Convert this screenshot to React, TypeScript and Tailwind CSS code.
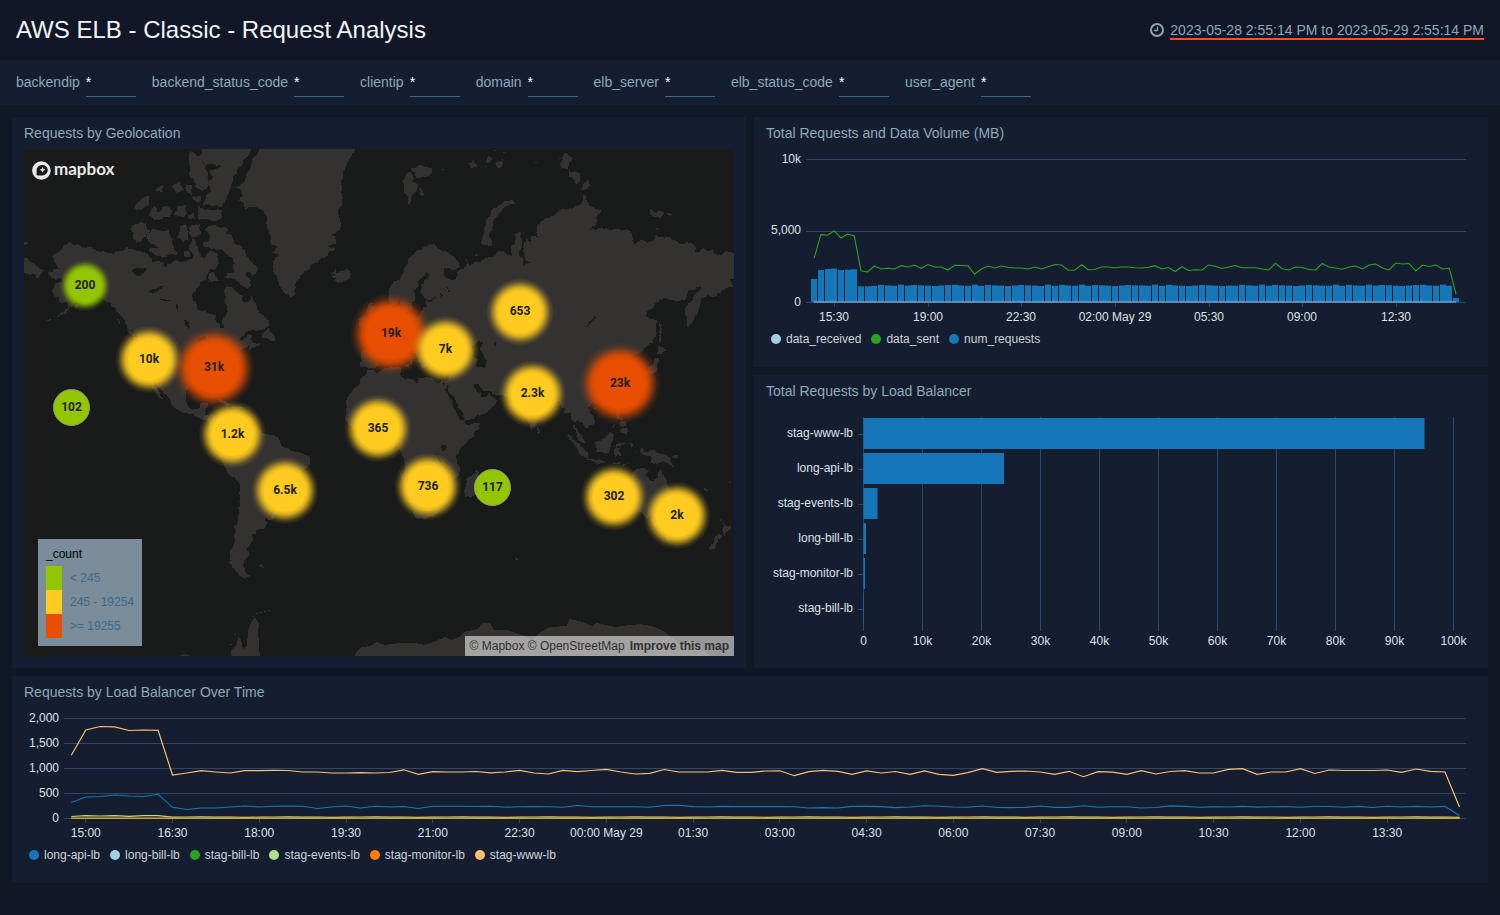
import React from "react";

/* ------------------------------------------------------------------ map */

type Pt = [number, number];

const LAND: string[] = [
  // North America
  "-168,65.6 -166,64.5 -161,64.5 -161,63.6 -164.5,63 -166,61.7 -165,60.6 -162,59.9 -162,58.7 -158.5,58.8 -157.5,57.5 -160,56 -163,55 -164.8,54.6 -161,55.2 -158,56.3 -156,57.5 -154,58.5 -153.5,59.5 -151.8,60.8 -150,61.2 -151.7,59.4 -148,60 -146,60.8 -143,60 -139.9,59.6 -137.5,58.9 -136,58.2 -133.5,57 -131.5,55.5 -130.2,54.6 -129,53 -127.5,51 -124.5,49.8 -123,49 -122.5,47.5 -124.7,48.3 -124,46.3 -124.2,43 -124.3,40.4 -123.7,39 -122.5,37.7 -121,35.5 -120.5,34.5 -118.5,34 -117.2,33 -116,30.5 -115,28 -114,27 -112.3,25 -110.3,23.2 -109.5,23.2 -111,25.5 -112.5,28 -114.5,31 -114.7,31.8 -113,31 -112,29 -110.5,27.3 -109.3,26 -107.5,24.5 -105.7,22.5 -105.5,20.5 -104,19 -101.7,17.8 -99,16.6 -96,15.8 -94.5,16.2 -92.2,14.6 -91,13.9 -88,13.2 -87.5,12.9 -85.9,11.2 -85.7,10 -84,9.5 -83.5,8.4 -82,8.2 -80.5,7.3 -80,8.3 -79.5,8.9 -78.2,7.5 -77,8.2 -79.5,9.5 -81.5,8.9 -83.5,10.8 -83.5,13 -83.2,15 -85.5,15.9 -88.3,15.7 -88.2,17.5 -87.8,18.5 -87,21.2 -88.3,21.5 -90.3,21.1 -90.7,19.5 -92,18.6 -94.5,18.1 -96,19 -97.5,21 -97.8,22.5 -97.5,25 -97.3,27.5 -95.5,28.9 -94,29.5 -91.8,29.6 -89.5,29 -89.5,30.2 -86.5,30.4 -84.2,30 -82.8,28.5 -82.3,27 -81,25.2 -80.2,25.7 -80.5,28 -81.3,30 -81,32 -79,33.5 -77.5,34.3 -75.7,35.2 -76,37 -75.2,38.3 -74,40 -74,40.7 -71,41.5 -70,41.7 -70.8,43 -69,44 -67,44.7 -66,45.2 -64.8,45.4 -66.1,44.3 -65.5,43.5 -63.5,44.6 -61,45.3 -60.2,46.5 -61.5,45.9 -64,46 -65,47.5 -64.5,48.8 -66.5,49.2 -70,47 -71,46.8 -68,49 -66.5,50.2 -62,50.2 -59,50.6 -57,51.5 -55.7,52.3 -55.9,53.5 -57.5,54.5 -60,55.3 -61.5,56.5 -61.8,57.8 -63.5,59.2 -64.5,60.3 -66,58.7 -68,58.5 -69.5,59 -69.6,60.5 -71.5,61.2 -74,62.3 -77.8,62.4 -77.5,60 -78.5,58.8 -77,57.3 -76.6,56 -79,54.6 -79,52.5 -78.8,51.3 -80.5,51.2 -82.3,53 -82.2,55.2 -85,55.3 -88,56.5 -92.5,57 -93,58.7 -94.7,59 -94.5,61 -93,62 -91,62.8 -90.7,63.7 -88,64.1 -87,65.3 -86,66.2 -83,66.2 -81.3,67.5 -81.5,69 -84.5,69.8 -86,69.9 -88,68.8 -88,67.9 -90,68.8 -91.5,69.7 -92,70.5 -93,71.5 -95,72 -95.5,71 -96.3,70 -94,69 -95.5,68.3 -98,67.8 -101,67.8 -104,68 -107.5,67.4 -108.5,66.6 -109,67.8 -111,67.8 -115,67.8 -115,68.5 -117,69 -121,69.8 -124.5,70.1 -127,70.2 -128,70.5 -131,69.9 -135,69.3 -139,69.6 -144,70 -148,70.4 -152,70.9 -156.5,71.3 -160,70.6 -163,69.5 -166,68.8 -164,67.5 -161.8,66.5 -164,66.5",
  // Greenland, Iceland
  "-73,78.4 -68,79.2 -66,80 -64,81 -61,82 -58,83.4 -30,83.9 -12,83.6 -11.5,81.9 -14,81.2 -16,80.5 -18,80 -19,78 -18.5,76.5 -21,75.5 -19.5,74.5 -21,73 -24,72.6 -22,72.2 -22,71 -26,70.5 -22,70.2 -26,69 -30,68.2 -33,67.5 -37,66 -40,65 -42,62.5 -43,60.2 -45,60 -48,61 -50,62.5 -52,65 -53.5,66.5 -53.7,68 -51,69.2 -54,69.5 -51.5,70.6 -54.5,70.8 -55,72 -57,74 -59,75.8 -63,76.2 -68,76 -71,77 -69,77.6",
  "-24.3,65.5 -22,66.4 -21.4,65.6 -20.5,65.7 -18,66.1 -16,66.4 -14.5,65 -15,64.3 -18.7,63.4 -22.5,63.9 -22,64.5 -24,64.9 -22.3,65.3",
  // Arctic archipelago
  "-92,83.5 -62,83.5 -62,82.5 -65,81.6 -69,80.6 -72,79.8 -74.5,78.9 -76,78 -78,77 -80,76.2 -84,76.4 -89,76.4 -88,77.5 -85,78 -87,79 -84,79.4 -86,80 -80,80.4 -84,80.6 -88,80.4 -91,81.2 -89,82",
  "-96,81.6 -91,81.2 -88,80.3 -86.5,79 -89,78.1 -93,78.4 -95.5,79.4 -96.5,80.6",
  "-79.5,75.8 -80,74.7 -85,74.5 -92,74.7 -92,76.6 -89,76 -84,75.9",
  "-89,73.2 -85,73.8 -81,73.6 -78,72.8 -74,71.8 -70,70.7 -67.5,69 -65,68 -62,67 -61.8,66 -64,65 -66,65.9 -68,65.6 -65,64 -64.7,62.8 -66.5,62 -69,62.8 -72,63.8 -75,64.5 -78,64.5 -77,65.5 -73.5,65.6 -73,67.5 -74,68.4 -77,69.2 -79,70 -82,69.9 -86,70.3 -88.5,70.5 -89,71.3 -86,71.5 -86,72.5",
  "-87,63.7 -85,65.8 -84,65.8 -81,64 -83,63.8",
  "-117,71.3 -118,72.5 -114,73.3 -110,73 -107,73.3 -105,72 -105,71 -101.5,69.6 -103,69 -106,69.3 -110,68.6 -114,69.2 -117,70 -112,70.4",
  "-125,71.9 -123,71.2 -120,71.7 -116,73 -118,74.2 -121,74.3 -124,74.1 -125.5,73.4",
  "-102.5,72 -101,73.6 -98,74 -96.5,73 -96.5,71.8 -99,71.3",
  "-95.5,72 -95.5,73.9 -91,74 -90.2,73 -92.5,72.1",
  "-117,75.2 -114,76.4 -112,75.6 -109,76.4 -105.5,75.9 -106,75 -110,74.7 -114,74.6",
  "-104,75.2 -102,76.4 -98,76.5 -97,75.4 -100,75",
  "-97,75.3 -93.5,76 -93,74.8 -96,74.7",
  "-124,76.2 -121,77 -116,77.5 -119,76.2 -123,75.9",
  "-105,78.5 -101,79 -99,78.2 -103,77.8",
  "-112,78.5 -109,78.7 -109.5,77.9 -113,77.9",
  "-98,78.8 -95,78.7 -95,77.6 -97.5,78",
  "-95,77.4 -90,77.6 -91,76.8",
  "-99,69.8 -96,69.5 -95.5,68.7 -99,69",
  "-79.5,73.6 -76.5,73.2 -78,72.8 -80.5,73",
  "-59,47.8 -57.5,50.5 -55.8,51.5 -55.5,50 -53.5,49 -53,47 -55.5,47 -56,47.7",
  "-64,49.9 -62,49.3 -63.5,49.4",
  "-128,50.8 -125.5,50.2 -123.5,48.5 -125,48.8",
  "-133,54 -131.8,54 -131.5,52.5",
  "-154.5,57.6 -152.5,58.3 -152.5,57.4 -154,57",
  "-169,53.3 -166,54.2 -167,53.4",
  "-84.8,22 -82,23.1 -79,22.7 -77,21.5 -74.3,20.2 -77.5,19.9 -77.5,20.8 -80.5,21.8 -82.5,22.6",
  "-74,19.9 -70,19.8 -68.5,18.6 -71,17.8 -74.3,18.3",
  "-78.3,18.4 -76.3,18.1 -77.3,17.8",
  "-67.2,18.5 -65.6,18.4 -67,18",
  // South America
  "-77.5,8.6 -75.5,10.8 -74,11.2 -71.7,12.4 -71.5,10.9 -70,11.8 -68,10.6 -64,10.4 -61.9,10.7 -61,8.5 -57,6 -52,4.8 -50,1.8 -49.5,0 -48,-1 -44.5,-2.5 -41,-3 -38.5,-3.8 -35.3,-5.3 -34.8,-8 -37,-11.5 -39,-13.5 -39,-17.5 -41,-22 -44.5,-23.2 -48,-25.5 -48.6,-28.5 -51,-31.5 -53.5,-34.2 -55,-35 -58,-34.3 -57,-36 -58,-38.2 -62,-39 -62.3,-40.8 -65,-41 -63.7,-42.5 -65.3,-44.5 -67.5,-46 -65.8,-47.5 -68.5,-50.2 -68.3,-52.3 -65.2,-54.8 -68,-55.7 -71,-54.8 -74.5,-52.5 -75.5,-49 -75.5,-46.7 -73,-44 -73.8,-41.5 -73.5,-38 -71.7,-33.5 -71.5,-30 -70.5,-26 -70.2,-20 -71.5,-17.5 -75.5,-15 -78,-10.5 -79.8,-7 -81.2,-5.5 -80.3,-3.5 -80.9,-2 -80,0.5 -78.5,2.2 -77.3,4 -77.5,7",
  "-61,-51.5 -58,-51.4 -60,-52.2",
  // Africa
  "-6,35.8 -2,35.2 3,36.8 10,37.3 11,36.8 10.3,34.2 12,32.8 15.3,32.3 19.5,30.3 20,32.5 23,32.6 29,30.9 32.5,31.2 33,30.5 32.6,29.9 33.5,27.8 35.5,24 37.2,21 37.5,18.7 39.5,15.5 43,12.5 43.3,11.5 45,10.5 51.2,11.8 50.8,9.5 48,4.5 44,1 41,-2 39,-4.7 39.5,-7 40.6,-10.5 40.6,-14.8 37,-17.7 34.8,-20 35.5,-24 32.8,-26 32,-28.8 28.5,-32.8 25.5,-34 20,-34.8 18.4,-34 17,-29.5 15,-26.8 14.4,-22.5 11.8,-17.5 13.5,-12.5 13,-8.5 12,-5.5 9.3,-2 9.5,1 9.6,3.8 8.5,4.6 6,4.3 4,6.4 1,5.9 -2,4.8 -7.5,4.4 -10,6 -13,8.5 -15,10.8 -16.7,12.5 -17.4,14.7 -16.3,16.5 -16.3,19.5 -17,21 -15.5,24.5 -13,27.7 -10,29.5 -9.7,31.5 -7,33.7",
  "49.3,-12 50.4,-15.7 47,-25 44,-25 43.3,-22 44.4,-19.5 44.4,-16.2 47,-15.3",
  // Eurasia
  "-9,37 -6,37 -5.5,36 -2,36.8 0,38.7 0,40 3,42 4.5,43.4 7.5,43.8 9,44.3 10.5,43 12.5,41.5 15,40.1 16,38 17,39 16.8,40.4 18.5,40.2 15.5,42 13.5,43.6 12.4,44.8 13.7,45.6 15,44.3 18,42.7 19.5,41.5 19.5,40 21.5,37 23,36.5 23.8,38 24,40.3 26,40.8 28.8,41 28,43 30,45.5 31.5,46.6 33.5,46 32.6,45.4 35,44.8 36.5,45.3 35,46.3 38,47 39.3,47.2 37.8,45.5 39.5,44 41.5,42 41.3,41.3 38,41 35,42 31.5,41.3 29.2,41 27,40.3 26.2,39 27.5,37 30,36.4 32.5,36.1 36,36.7 35.8,34.5 34.9,32 34.2,31.3 32.2,31.2 32.6,29.9 34.2,27.8 34.9,29.5 35,28 37,25 39,21.5 42.5,16.8 43.3,12.7 45,12.9 52,15.6 55.5,18 59.8,22.4 58.5,23.7 56.4,24.8 56.3,26.2 54,24.2 51.5,24.3 51.3,26 50.2,26.5 48,29.7 50.5,29.8 53,27 57,27 57.5,25.6 61.5,25 66.5,25.2 68.5,23.5 70.5,20.8 72.7,21 72.8,19 74.5,14 76.3,10 77.5,8 79.8,10.3 80.2,13.2 80.3,15.6 82.3,16.7 86.8,20.5 89,21.8 91.8,22.4 94.3,18.5 94.3,16 97,17 98.5,13 98.5,8.5 100.3,6 101,3 103.5,1.3 104.2,1.5 103.4,4.5 101,7 99.3,9.3 99.2,12 100.5,13.5 102.5,12 104.9,8.7 106.7,10.4 109.3,11.8 109,14.5 107,17 105.8,19 108,21.6 110.5,21 114,22.4 117,23.5 119.5,25.7 121.8,29 121.9,31.2 120,34 119.3,35 122.5,37 119,37.5 118,39 121.5,40.8 121.5,39 124.5,40 125,38 126.5,36 126.5,34.3 129.2,35.3 129.4,37 127.6,39.3 130,42 133,42.8 136,45 140.5,48.5 140.5,52.5 141.4,53.2 138,54 135.3,54.7 139,57.3 142,59.2 148,59.3 152,59 155,59.3 157,61.5 160,61.8 163.5,62.5 160,60.5 156.5,58 155.6,55 156.7,51 158.3,52.5 160,54 162,56 163,58 163.3,59.8 166,60.2 170,60 174,61.7 177.5,62.5 179.3,62.6 178,64.3 182,65 182,69 176,69.8 170,69.2 170,70 160,69.6 160,70.8 152,71 150,71.6 140,72.5 139,71.5 133,71.7 129.5,71 128,73 123,73 118,73.2 113,73.5 107,73.2 110,74 113,75.8 104,77.7 100,76.4 93,76 87,75 80,73.6 80.5,72 77,72.5 77,71.2 74.8,72 73.5,71 74,68.5 77,67.8 74,67.2 72,66.2 73.5,68 71,69 72.5,71.5 72.5,72.9 69.5,72.8 67,70.5 67,68.8 65,69.2 60.5,69.8 58.5,68.9 54,68.5 48,67.6 46,66.8 44.5,68.5 43,66.5 40,66 38,64 35,64.4 33,66.6 38,66.1 41,67 40.5,67.8 36,69.2 31,70 28,71 23,70.6 18,69.5 15,68.5 12.5,66 10.5,64 5.5,62.3 5,60 6.5,58 10.5,59.2 11.5,58 12.8,55.5 16,56.3 16.7,58.5 18.8,60 17.3,61.5 21.5,64.5 24,65.8 25.3,65 21.5,62.8 21.3,60.9 23,59.9 29.5,60 24,59.3 23.4,58.5 24.3,57.5 22,57.5 21,55.5 19,54.4 14.2,53.9 11,54.2 10.8,56.5 10.6,57.6 8.2,57 8.7,54 5,53.3 3.5,51.5 1.6,50.6 -1.3,49.5 -4.7,48.5 -2,47 -1.2,44.5 -1.8,43.4 -8,43.7 -9,42.5 -9.5,38.7",
  "-182,69 -178,68.5 -174,67 -170,66.1 -173,64.4 -176,65.4 -179,65.5 -182,65",
  "-180,71.3 -178,71.3 -178,71 -180,70.9",
  // European islands
  "-5.5,50.1 1.3,51.2 1.6,52.8 0,53.5 -1.5,55.2 -3,56 -2,57.6 -4,57.8 -3,58.6 -5,58.5 -6,56.5 -4.8,54.8 -3,54 -4.5,53 -5,51.8 -3,51.3",
  "-10,51.8 -6.5,52.2 -6,54 -7,55.3 -10,54",
  "8.3,40.8 9.5,41 9.6,39.2 8.5,39",
  "12.5,38 15.5,38.2 15,36.8",
  "23.6,35.5 26.2,35.2 24,35",
  "32.3,35 34.5,35.6 33,34.6",
  "11,79.8 14,77.6 15.5,76.5 17,77.6 20,78.7 17,79 16,79.9 13,79.3",
  "16,80.1 20,80.5 27,80.2 25,79.5 20,79.3",
  "20.5,78.4 23,77.7 21.5,77.5",
  "45,80.6 48,80.9 50,80.4 47,80.2",
  "55,81.2 58,81 56,80.6 54,80.8",
  "59,80.6 63,81 61,80.2",
  "52,71 53,72.5 56,75 60,76.2 68,77 69,76.6 62,75.7 58,74 56,72.5 57.5,71.4 57,70.7",
  "48.5,69.4 50,69 48.8,68.8",
  // Siberian islands
  "93,80.8 95,81.5 98,81.1 96,80.2 92,80.3",
  "96,80.1 101,79.9 102,79.2 100,78.8 96,79.5",
  "102.5,78.2 106,79.2 107.5,78.6 104,78.1",
  "137,76 139,75 142,74.9 145,75.6 142,75.8 140,75.5",
  "146,75.5 150,75.2 147,75",
  "140,73.5 143.5,73.3 141,73.3",
  // East Asia
  "142,54.2 143.5,52 143.2,49.5 142.7,46.5 142,46.5 142,50",
  "140.5,42 141.5,45.4 145.3,43.5 143,42",
  "131,34.2 136,35.8 139,38 140.3,40.8 141.8,40.5 141,37 140,35 136,33.7 133,34.3",
  "130,33.5 131.8,33.3 131,31.2 130,32",
  "132.5,34 134.5,34.2 133.3,32.9",
  "120.2,22.8 121.5,25.1 121.8,24.5 120.9,22",
  "108.7,19.3 110.8,20 109.8,18.3",
  "79.9,8.5 80.5,9.6 81.8,7.3 80.5,6",
  "120.3,16 120.7,18.5 122.2,18.2 121.5,15.8 124,13 121,13.7",
  "122,7 125.5,9.7 126.5,7.5 125.5,5.8 124,6.5",
  "122,11.8 125.5,12.4 125,10.3 123,9.3",
  "117.3,8.4 119.4,11.2 118.5,9",
  "95.3,5.6 97.5,5.2 100.5,2 104,-1.5 106,-3 105.8,-5.8 104.5,-5.7 101,-2.5 98.7,1.7",
  "105.3,-6.7 108.5,-6.6 112,-6.8 114.4,-7.8 114,-8.6 108,-7.8",
  "116,-8.4 119,-8.3 122.8,-8.2 119,-9",
  "124,-9.3 127,-8.4 125,-9.8 123.6,-10.3",
  "109.2,1.8 111.5,2.5 113.5,3.5 117,7 119,5.2 117.8,1 116.3,-3.5 114.5,-4 110.2,-2.8",
  "119,-3 120,0.8 125,1.5 121,0.3 120.5,-1 123,-0.9 121.5,-1.8 122.5,-5 121,-4 120.4,-5.5 119.5,-5.5",
  "127.5,2 128.6,1 128,-0.8",
  "128,-3 130.7,-3.2 129,-3.5",
  "131,-0.8 134,-0.8 135,-3.3 138,-1.7 144.5,-3.9 147.5,-6 150.5,-10.5 147,-9.3 144,-7.7 141,-9.1 138,-8.2 138,-5.5 133,-4",
  "148.5,-5.6 152,-4.3 151,-6",
  // Oceania
  "113.7,-22.5 115.8,-20.7 119,-20 122,-18 125,-14.5 128,-15 130,-12 132.5,-11.3 136.8,-12.2 135.5,-14.8 139,-17.4 141,-16 142.3,-11 143.8,-14.5 146,-18.8 149.5,-22.3 153,-25.5 153.5,-29 151.5,-33 150,-37.3 146.5,-38.8 143.5,-38.7 140,-37.5 138,-35.5 137.5,-33 135.7,-34.8 131.5,-31.5 126,-32.3 123.5,-33.9 118.5,-35 115,-34.2 115.7,-31.5 113.5,-26",
  "144.8,-40.8 148.2,-40.8 147.5,-43.3 146,-43.3",
  "172.7,-34.5 175.5,-36.7 178.5,-37.7 177,-39.5 175.2,-41.6 173.8,-39.3 174.8,-37",
  "172.7,-40.6 174.2,-41.8 171,-44.5 170.5,-46 168.3,-46.6 166.5,-46 170,-43",
  "164.2,-20.2 166.9,-22.2 165,-21.3",
  "69,-49 70.5,-49.3 69.5,-49.7",
];

const LAKES: string[] = [
  "-125,66.3 -122,66.7 -118,66.8 -118,66 -121,65 -124,65.3",
  "-117,61.2 -114,62 -109,62.8 -112,61.5 -115,60.9",
  "-111,59.4 -106,59.1 -109,59",
  "-99,53.6 -97.6,53.8 -96.3,50.6 -98,51.8",
  "-103,58.5 -101.8,57 -102.3,56.5",
  "-92,46.7 -88,48.7 -84.8,46.6 -88,47",
  "-88,42 -87.5,45.5 -85,45.8 -86.3,42",
  "-84,46 -80,45.3 -82,43.2 -83.5,44",
  "-83,41.8 -79,42.8 -81,42.5",
  "-79.7,43.4 -76.5,43.9 -78,43.4",
  "47,45 50,46.8 53,46.7 51,44.5 53,42 54,37 49,37.5 49.5,40.5 47.5,43",
  "58.5,46 60,46.5 59.2,44.6",
  "103.8,51.5 106,51.9 109.8,55.5 107,53.5",
  "30.5,61.5 32.8,60.5 31,59.9",
  "34.5,62.6 36.2,61.2 35,61.2",
  "31.8,0.3 34,0.3 34,-2 32,-2.6",
  "29.2,-3.5 31.2,-8.5 30.2,-7.5",
  "34,-9.8 35.2,-13.8 34.6,-13",
];

/* Antarctica, in view coordinates */
const SOUTH: string[] = [
  "232,660 231,650 237,645 238,637 241,640 243,649 247,646 248,630 251,623 255,617 259,624 258,632 259,644 260,660",
  "352,660 356,653 361,647 370,646 377,642 384,645 400,643 416,643 424,645 436,641 445,637 452,640 459,637 464,632 478,629 482,623 490,623 494,630 508,630 515,633 524,636 532,640 541,632 550,627 567,626 569,619 580,621 592,626 597,623 615,627 640,624 655,627 665,632 678,643 690,646 704,651 716,660",
  "178,656 184,654 190,655 190,657",
];

const SPECKS: Pt[] = [
  [252, 616], [256, 613], [260, 612], [264, 611], [268, 610], [230, 644], [234, 634],
  [442, 169], [485, 166], [494, 150], [503, 152], [535, 162], [516, 559], [559, 158],
  [729, 482], [704, 489], [262, 567],
];

const noise = (n: number) => {
  const s = Math.sin(n * 127.1) * 43758.5453;
  return s - Math.floor(s) - 0.5;
};

const parse = (s: string): Pt[] => s.split(" ").map((p) => p.split(",").map(Number) as Pt);

const project = ([lon, lat]: Pt): Pt => [
  379 + 1.972 * lon,
  446 - 113 * Math.log(Math.tan(Math.PI / 4 + (lat * Math.PI) / 360)),
];

const roughen = (pts: Pt[], seed: number): Pt[] => {
  let cur = pts;
  for (let k = 0; k < 3; k++) {
    const next: Pt[] = [];
    cur.forEach((a, i) => {
      const b = cur[(i + 1) % cur.length];
      const dx = b[0] - a[0];
      const dy = b[1] - a[1];
      next.push(a);
      if (Math.hypot(dx, dy) > 2) {
        const d = noise(seed + i * 3.7 + k * 11.3) * 0.42;
        next.push([(a[0] + b[0]) / 2 - dy * d, (a[1] + b[1]) / 2 + dx * d]);
      }
    });
    cur = next;
  }
  return cur;
};

const toPath = (pts: Pt[]) => "M" + pts.map((p) => `${p[0].toFixed(1)} ${p[1].toFixed(1)}`).join("L") + "Z";

const landPath = LAND.map((s, i) => toPath(roughen(parse(s).map(project), i + 1))).join("");
const lakePath = LAKES.map((s, i) => toPath(roughen(parse(s).map(project), i + 90))).join("");
const southPath = SOUTH.map((s) => toPath(parse(s))).join("");

type Kind = "red" | "yellow" | "green" | "dot";
const RADIUS: Record<Kind, number> = { red: 41, yellow: 34, green: 26, dot: 18 };
const MARKERS: [string, number, number, Kind][] = [
  ["200", 85, 285.5, "green"],
  ["10k", 149, 359.5, "yellow"],
  ["31k", 214, 368, "red"],
  ["102", 71.5, 407.5, "dot"],
  ["1.2k", 232.5, 434.5, "yellow"],
  ["6.5k", 285, 490.5, "yellow"],
  ["19k", 391, 334, "red"],
  ["7k", 445.5, 349.5, "yellow"],
  ["653", 520, 312, "yellow"],
  ["2.3k", 532.5, 394, "yellow"],
  ["23k", 620, 383.5, "red"],
  ["365", 378, 428.5, "yellow"],
  ["736", 428, 486.500, "yellow"],
  ["117", 492.5, 487.5, "dot"],
  ["302", 614, 497, "yellow"],
  ["2k", 677, 515.5, "yellow"],
];

const GLOWS: [Kind, string][] = [
  ["red", "#e84e00"],
  ["yellow", "#ffcb1f"],
  ["green", "#93c500"],
];

function WorldMap() {
  return (
    <svg viewBox="24 149 710 507" className="block h-auto w-full bg-[#191b1a]" role="img" aria-label="World map">
      <defs>
        {GLOWS.map(([k, c]) => (
          <radialGradient key={k} id={`glow-${k}`}>
            <stop offset="0.6" stopColor={c} />
            <stop offset="0.7" stopColor={c} stopOpacity="0.84" />
            <stop offset="0.8" stopColor={c} stopOpacity="0.5" />
            <stop offset="0.9" stopColor={c} stopOpacity="0.16" />
            <stop offset="1" stopColor={c} stopOpacity="0" />
          </radialGradient>
        ))}
      </defs>
      <g shapeRendering="crispEdges">
        <path d={landPath + southPath} fill="#343231" />
        <path d={lakePath} fill="#191b1a" />
        {SPECKS.map(([x, y]) => (
          <rect key={`${x}-${y}`} x={x} y={y} width="2" height="1" fill="#343231" />
        ))}
      </g>
      {MARKERS.map(([label, x, y, kind]) => (
        <g key={label}>
          {kind === "dot" ? (
            <circle cx={x} cy={y} r={RADIUS.dot} fill="#93c500" stroke="#8f9a80" strokeWidth="1" />
          ) : (
            <circle cx={x} cy={y} r={RADIUS[kind]} fill={`url(#glow-${kind})`} />
          )}
          <text x={x} y={y + 3} textAnchor="middle" className="fill-[#1e2226] font-['Roboto',sans-serif] text-[12px] font-bold">
            {label}
          </text>
        </g>
      ))}
      <circle cx="41.4" cy="170.5" r="9.3" fill="#e9e9e9" />
      <path d="M36.6 175.3v-4.6a5.6 5.3 0 1 1 5.6 4.8c-2 .1-3.8.1-5.6-.2z" fill="#191b1a" />
      <path d="M42.6 166.900l.9 2 2 .9-2 .9-.9 2-.9-2-2-.9 2-.9z" fill="#e9e9e9" />
      <text x="54" y="175" className="fill-[#e9e9e9] font-['Lato',sans-serif] text-[17px] font-bold">
        mapbox
      </text>
    </svg>
  );
}

const MAP_LEGEND: [string, string][] = [
  ["bg-[#93c500]", "< 245"],
  ["bg-[#ffcb1f]", "245 - 19254"],
  ["bg-[#e84e00]", ">= 19255"],
];

/* --------------------------------------------------------------- charts */

const AXIS = "stroke-[#2f4668]";
const LABEL = "fill-[#dde2e7] text-[12px]";

const SENT = [
  258, 234.7, 235.3, 230.7, 238, 234, 236, 270.7, 272, 266, 269, 268.3, 269, 265.7, 267, 265, 268.3, 264.5, 267, 267,
  270, 265.3, 265.5, 265.8, 274.3, 269, 266, 268, 266, 267.3, 268, 268, 269, 267, 269, 266.7, 264.5, 265, 270.3, 270,
  264.7, 269.7, 269.5, 267, 267, 267.7, 267, 267, 267.7, 268, 267.3, 265.7, 269, 267.5, 271.5, 266.7, 270.5, 269.7,
  270, 265, 266.3, 268.5, 267, 265.5, 267.7, 267.7, 267.7, 269, 270, 263.3, 268.7, 270, 267, 267.5, 269.5, 270, 263.5,
  267, 268, 269.3, 267, 266, 269, 265, 264, 268, 270, 263, 264, 263.5, 271, 265, 266.5, 265, 269, 268, 294,
];
const REQS_HEAD = [279, 270, 269, 268.5, 270, 269.7, 269.3, 286.3, 286.3];
const REQS_CYCLE = [285.3, 285.7, 285.5, 284.8, 285.6, 284.6, 285, 285.4, 286, 285.8];
const reqTop = (i: number) => (i < REQS_HEAD.length ? REQS_HEAD[i] : i === 96 ? 298 : REQS_CYCLE[(i * 3 + (i % 7)) % 10]);

const line = (ys: number[], x0: number, step: number) =>
  ys.map((y, i) => `${(x0 + i * step).toFixed(1)},${y}`).join(" ");

function VolumeChart() {
  const x = (i: number) => 814.2 + i * 6.685;
  const ticks = ["15:30", "19:00", "22:30", "02:00 May 29", "05:30", "09:00", "12:30"];
  return (
    <svg viewBox="766 149 710 182" className="block h-auto w-full" role="img" aria-label="Requests and data volume">
      {[159.5, 231.5, 302.5].map((y) => (
        <path key={y} d={`M806 ${y}H1466`} className={AXIS} />
      ))}
      {[["10k", 163], ["5,000", 234], ["0", 306]].map(([t, y]) => (
        <text key={t} x="801" y={y} textAnchor="end" className={LABEL}>{t}</text>
      ))}
      {SENT.map((_, i) => (
        <rect key={i} x={Math.round(x(i)) - 3} y={reqTop(i)} width="6" height={302 - reqTop(i)} fill="#1677b8" />
      ))}
      <polyline points={line(SENT, 814.2, 6.685)} fill="none" stroke="#2ca31f" strokeWidth="1.1" />
      <path d="M814 302H1456" stroke="#8cc4e4" strokeWidth="1.2" />
      {ticks.map((t, k) => (
        <g key={t}>
          <path d={`M${Math.round(x(3 + 14 * k)) + 0.5} 303V307`} className={AXIS} />
          <text x={Math.round(x(3 + 14 * k))} y="321" textAnchor="middle" className={LABEL}>{t}</text>
        </g>
      ))}
    </svg>
  );
}

const BALANCERS: [string, number][] = [
  ["stag-www-lb", 561],
  ["long-api-lb", 140.5],
  ["stag-events-lb", 14],
  ["long-bill-lb", 2.5],
  ["stag-monitor-lb", 1.5],
  ["stag-bill-lb", 0.5],
];

function BalancerChart() {
  return (
    <svg viewBox="766 407 710 249" className="block h-auto w-full" role="img" aria-label="Requests by load balancer">
      {Array.from({ length: 11 }, (_, i) => (
        <g key={i}>
          <path d={`M${863.5 + i * 59} 417V631`} className={AXIS} />
          <text x={863.5 + i * 59} y="645" textAnchor="middle" className={LABEL}>{i === 0 ? "0" : `${i * 10}k`}</text>
        </g>
      ))}
      {BALANCERS.map(([name, w], i) => (
        <g key={name}>
          <path d={`M858 ${434.5 + i * 35}H863`} className={AXIS} />
          <text x="853" y={437 + i * 35} textAnchor="end" className={LABEL}>{name}</text>
          <rect x="863.5" y={418 + i * 35} width={w} height="31" fill="#1677b8" />
        </g>
      ))}
    </svg>
  );
}

const WWW = [
  755.3, 730, 726.5, 726.8, 730.5, 730, 730.4, 775, 773, 770.7, 772, 773, 770.7, 770.7, 770.3, 770.5, 772, 772, 773,
  773, 772.7, 773, 772.5, 769.8, 774.3, 771.7, 772, 772, 771.5, 772.8, 772, 770.3, 773, 774, 770.3, 771.7, 770.5, 769.3,
  772, 774, 773.3, 769.5, 772, 772, 772, 770.3, 772.3, 772.3, 771, 770.8, 775.7, 771.7, 770.3, 771.3, 774.3, 770.8, 773,
  771.5, 774.3, 770.8, 774.3, 775.3, 772.7, 768.7, 772.3, 771.3, 771, 772, 774.3, 771.3, 776.7, 771.7, 772.2, 774.3,
  770.7, 774, 771.5, 770.7, 773, 773, 769.3, 768.7, 774.3, 772, 772, 768.7, 773.5, 770, 770.5, 770.5, 770.5, 770, 772.3,
  769, 771.3, 772, 807,
];
const API = [
  802.5, 797, 796.5, 795, 796, 796.5, 794.3, 807.3, 809.5, 808, 808, 807, 806, 807, 806.3, 806, 806.3, 808.5, 807, 806,
  808, 806.3, 807, 806.5, 808.5, 806.3, 806.3, 806.3, 806.5, 806.3, 807.3, 806.8, 806.5, 806.8, 807.3, 805.5, 806.7,
  806.7, 806.7, 806.7, 807.2, 805.5, 805.3, 806.6, 807, 806.4, 806.6, 806.6, 806.6, 806.6, 806.8, 808, 807.6, 808, 806.4,
  806.4, 806.6, 807.6, 807, 805.8, 806.3, 807, 807.3, 806, 807.5, 807.6, 807.4, 806, 807.4, 807.4, 805.8, 807.3, 806.7,
  806.7, 808, 807.5, 805.9, 806.4, 807.2, 806.9, 807, 806.4, 807.1, 806.8, 806.5, 807.3, 806.5, 806.5, 807.2, 806.4,
  807.5, 806.3, 807, 806.4, 807, 806.4, 815.5,
];
const EVENTS = API.map((_, i) =>
  i < 7 ? [816.5, 815.7, 816, 815.7, 816.4, 815.6, 815.7][i] : [817.3, 817, 817.2, 816.9, 817, 817.2][(i * 5) % 6]
);

function TimelineChart() {
  const x = (i: number) => 71.3 + i * 14.46;
  const ticks = [
    "15:00", "16:30", "18:00", "19:30", "21:00", "22:30", "00:00 May 29", "01:30",
    "03:00", "04:30", "06:00", "07:30", "09:00", "10:30", "12:00", "13:30",
  ];
  return (
    <svg viewBox="24 708 1452 139" className="block h-auto w-full" role="img" aria-label="Requests over time">
      {["2,000", "1,500", "1,000", "500", "0"].map((t, i) => (
        <g key={t}>
          <path d={`M64 ${718.5 + i * 25}H1466`} className={AXIS} />
          <text x="59" y={722 + i * 25} textAnchor="end" className={LABEL}>{t}</text>
        </g>
      ))}
      {ticks.map((t, k) => (
        <g key={t}>
          <path d={`M${Math.floor(x(1 + 6 * k)) + 0.5} 819V823`} className={AXIS} />
          <text x={x(1 + 6 * k)} y="837" textAnchor="middle" className={LABEL}>{t}</text>
        </g>
      ))}
      <polyline points={line(API, 71.3, 14.46)} fill="none" stroke="#1677b8" strokeWidth="1.1" />
      <polyline points={line(EVENTS, 71.3, 14.46)} fill="none" stroke="#b2df8a" strokeWidth="1.2" />
      <path d="M71 818.3H1460" stroke="#e59a22" strokeWidth="1.4" />
      <polyline points={line(WWW, 71.3, 14.46)} fill="none" stroke="#fdbf6f" strokeWidth="1.2" />
    </svg>
  );
}

/* --------------------------------------------------------------- layout */

function Panel({ title, children }: { title: string; children: React.ReactNode }) {
  return (
    <section className="bg-[#151e30] px-3 pt-2 pb-3">
      <h2 className="mb-2 text-sm leading-4 text-[#8ea9b8]">{title}</h2>
      {children}
    </section>
  );
}

function Legend({ items }: { items: [string, string][] }) {
  return (
    <ul className="mb-2 flex flex-wrap gap-x-[10px] pl-[5px] text-xs text-[#cdd3d9]">
      {items.map(([color, name]) => (
        <li key={name} className="flex items-center gap-[5px] leading-4">
          <span className={`size-[10px] rounded-full ${color}`} />
          {name}
        </li>
      ))}
    </ul>
  );
}

const FILTERS = ["backendip", "backend_status_code", "clientip", "domain", "elb_server", "elb_status_code", "user_agent"];

export default function App() {
  return (
    <div className="min-h-screen bg-[#111726] font-['Liberation_Sans',Arial,sans-serif]">
      <header className="flex h-[60px] items-center justify-between px-4">
        <h1 className="text-2xl text-[#f2f5f8]">AWS ELB - Classic - Request Analysis</h1>
        <button type="button" className="flex items-center gap-[6px] text-sm text-[#8fa5b8]">
          <svg viewBox="0 0 14 14" className="size-[14px]" fill="none" stroke="currentColor" aria-hidden="true">
            <circle cx="7" cy="7" r="6" strokeWidth="2" />
            <path d="M7.5 3.5V7.5H4" strokeWidth="1.3" />
          </svg>
          <span className="border-b-2 border-[#f5502a] pt-[2px] leading-4">2023-05-28 2:55:14 PM to 2023-05-29 2:55:14 PM</span>
        </button>
      </header>

      <form className="flex flex-wrap gap-x-4 bg-[#151e30] px-4 pt-[7px] pb-2">
        {FILTERS.map((name) => (
          <label key={name} className="flex h-[30px] items-center gap-[6px] text-sm text-[#8ca8b9]">
            {name}
            <input
              type="text"
              name={name}
              defaultValue="*"
              className="h-full w-[50px] border-b border-[#3a6b8c] bg-transparent text-white outline-none"
            />
          </label>
        ))}
      </form>

      <main className="flex flex-col gap-2 bg-[#101825] p-3">
        <div className="grid grid-cols-2 gap-2">
          <Panel title="Requests by Geolocation">
            <div className="relative">
              <WorldMap />
              <div className="absolute bottom-[10px] left-[14px] bg-[#7b8d9a] px-2 pt-[3px] pb-2 text-xs">
                <p className="leading-6 text-black">_count</p>
                {MAP_LEGEND.map(([color, name]) => (
                  <div key={name} className="flex h-6 items-center gap-2 text-[#3d6788]">
                    <span className={`h-6 w-4 ${color}`} />
                    {name}
                  </div>
                ))}
              </div>
              <p className="absolute right-0 bottom-0 flex gap-[5px] bg-white/55 px-[5px] text-xs leading-5 text-[#303234]">
                <span>
                  <a href="#mapbox">© Mapbox</a> <a href="#osm">© OpenStreetMap</a>
                </span>
                <a href="#improve" className="font-bold">Improve this map</a>
              </p>
            </div>
          </Panel>

          <div className="flex flex-col gap-2">
            <Panel title="Total Requests and Data Volume (MB)">
              <VolumeChart />
              <Legend
                items={[
                  ["bg-[#a6cee3]", "data_received"],
                  ["bg-[#2ca31f]", "data_sent"],
                  ["bg-[#1677b8]", "num_requests"],
                ]}
              />
            </Panel>
            <Panel title="Total Requests by Load Balancer">
              <BalancerChart />
            </Panel>
          </div>
        </div>

        <Panel title="Requests by Load Balancer Over Time">
          <TimelineChart />
          <Legend
            items={[
              ["bg-[#1677b8]", "long-api-lb"],
              ["bg-[#a6cee3]", "long-bill-lb"],
              ["bg-[#2ca31f]", "stag-bill-lb"],
              ["bg-[#b2df8a]", "stag-events-lb"],
              ["bg-[#ff7f00]", "stag-monitor-lb"],
              ["bg-[#fdbf6f]", "stag-www-lb"],
            ]}
          />
        </Panel>
      </main>
    </div>
  );
}
